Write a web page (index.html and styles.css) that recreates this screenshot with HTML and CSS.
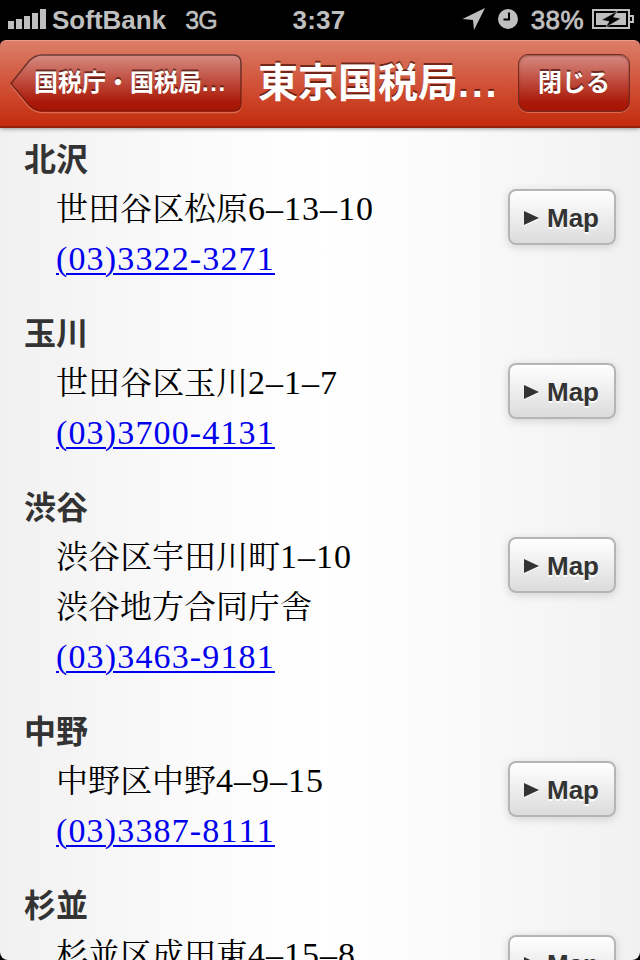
FILE: index.html
```html
<!DOCTYPE html>
<html lang="ja">
<head>
  <meta charset="UTF-8" />
  <title>東京国税局</title>
  <link rel="stylesheet" href="styles.css">
</head>
<body>
  <div class="status-bar">
    <div class="status-left">
      <svg class="signal" width="38" height="20" viewBox="0 0 38 20" fill="#bfbfbf">
        <rect x="0" y="12" width="6" height="8" />
        <rect x="8" y="10" width="6" height="10" />
        <rect x="16" y="7" width="6" height="13" />
        <rect x="24" y="4" width="6" height="16" />
        <rect x="32" y="0" width="6" height="20" />
      </svg>
      <span class="carrier">SoftBank</span>
      <span class="network">3G</span>
    </div>
    <span class="clock">3:37</span>
    <div class="status-right">
      <svg width="24" height="24" viewBox="0 0 24 24" fill="#bfbfbf">
        <path d="M23 1 L0.5 12 L11 13 L12 23 Z" />
      </svg>
      <svg class="alarm" width="20" height="20" viewBox="0 0 20 20">
        <circle cx="10" cy="10" r="10" fill="#bfbfbf" />
        <path d="M11 3.5 V10.5 H5.5" fill="none" stroke="#000" stroke-width="2" />
      </svg>
      <span class="percent">38%</span>
      <svg width="42" height="20" viewBox="0 0 42 20">
        <rect x="1" y="1" width="36" height="18" fill="none" stroke="#bfbfbf" stroke-width="2" />
        <rect x="4" y="4" width="30" height="12" fill="#bfbfbf" />
        <path d="M38 7 H41 V13 H38" fill="none" stroke="#bfbfbf" stroke-width="2" />
        <path d="M25.5 2 L9.5 11 L17 12.5 L13.5 18.5 L29 9.5 L21.5 8 Z" fill="#000" stroke="#bfbfbf" stroke-width="0.6" />
      </svg>
    </div>
  </div>

  <div class="nav-wrap">
    <div class="nav-bar">
      <button class="back-button">
        <svg class="back-shape" width="234" height="62" viewBox="0 0 234 62">
          <defs>
            <linearGradient id="backFill" x1="0" y1="0" x2="0" y2="1">
              <stop offset="0" stop-color="#d68b82" />
              <stop offset="0.5" stop-color="#bd4738" />
              <stop offset="0.85" stop-color="#aa1908" />
              <stop offset="1" stop-color="#a51505" />
            </linearGradient>
            <linearGradient id="backLine" x1="0" y1="0" x2="0" y2="1">
              <stop offset="0" stop-color="#6c3a34" />
              <stop offset="1" stop-color="#841708" />
            </linearGradient>
          </defs>
          <path d="M1 31 L19 8 Q25 2 32 2 H223 Q231 2 231 10 V50 Q231 58.5 223 58.5 H32 Q25 58.5 19 53 Z" fill="none" stroke="#e58168" stroke-opacity="0.7" stroke-width="1.6" />
          <path d="M1 29.5 L19 7 Q25 1 32 1 H223 Q231 1 231 9 V49 Q231 57 223 57 H32 Q25 57 19 51 Z" fill="url(#backFill)" stroke="url(#backLine)" stroke-width="1.6" />
        </svg>
        <span class="back-label">国税庁・国税局<span class="dots">...</span></span>
      </button>
      <h1 class="nav-title">東京国税局<span class="dots">...</span></h1>
      <button class="close-button">閉じる</button>
    </div>
  </div>

  <div class="content">
    <div class="office">
      <div class="info">
        <h2>北沢</h2>
        <p>世田谷区松原<span class="num">6–13–10</span></p>
        <p><a class="tel" href="tel:0333223271">(03)3322-3271</a></p>
      </div>
      <button class="map-button"><i class="arrow"></i>Map</button>
    </div>
    <div class="office">
      <div class="info">
        <h2>玉川</h2>
        <p>世田谷区玉川<span class="num">2–1–7</span></p>
        <p><a class="tel" href="tel:0337004131">(03)3700-4131</a></p>
      </div>
      <button class="map-button"><i class="arrow"></i>Map</button>
    </div>
    <div class="office">
      <div class="info">
        <h2>渋谷</h2>
        <p>渋谷区宇田川町<span class="num">1–10</span></p>
        <p>渋谷地方合同庁舎</p>
        <p><a class="tel" href="tel:0334639181">(03)3463-9181</a></p>
      </div>
      <button class="map-button"><i class="arrow"></i>Map</button>
    </div>
    <div class="office">
      <div class="info">
        <h2>中野</h2>
        <p>中野区中野<span class="num">4–9–15</span></p>
        <p><a class="tel" href="tel:0333878111">(03)3387-8111</a></p>
      </div>
      <button class="map-button"><i class="arrow"></i>Map</button>
    </div>
    <div class="office">
      <div class="info">
        <h2>杉並</h2>
        <p>杉並区成田東<span class="num">4–15–8</span></p>
      </div>
      <button class="map-button"><i class="arrow"></i>Map</button>
    </div>
  </div>
</body>
</html>
```
FILE: styles.css
```css
* {
  box-sizing: border-box;
}
body {
  margin: 0;
  height: 960px;
  display: flex;
  flex-direction: column;
  overflow: hidden;
  background: #000;
  font-family: "Liberation Sans", "Noto Sans CJK JP", sans-serif;
}
button {
  padding: 0;
  font-family: inherit;
  cursor: pointer;
}

/* status bar */
.status-bar {
  flex: none;
  height: 40px;
  display: grid;
  grid-template-columns: 1fr auto 1fr;
  align-items: center;
  padding: 0 6px 2px 8px;
  color: #bfbfbf;
  font-size: 26px;
  font-weight: bold;
  line-height: 36px;
}
.status-left,
.status-right {
  display: flex;
  align-items: center;
}
.status-right {
  justify-content: flex-end;
}
.carrier,
.network,
.clock,
.percent {
  padding-top: 2px;
}
.carrier {
  margin-left: 6px;
}
.network {
  margin-left: 19px;
  font-size: 25px;
  font-weight: normal;
  letter-spacing: -0.8px;
  -webkit-text-stroke: 0.5px #bfbfbf;
}
.clock {
  margin-right: 4px;
  letter-spacing: 0.3px;
}
.alarm {
  margin-left: 12px;
}
.percent {
  margin: 0 8px 0 13px;
  font-weight: normal;
  letter-spacing: 0.4px;
  -webkit-text-stroke: 0.8px #bfbfbf;
}

/* navigation bar */
.nav-wrap {
  flex: none;
  position: relative;
  z-index: 1;
  box-shadow: 0 1px 4px rgba(0, 0, 0, 0.4);
}
.nav-bar {
  height: 88px;
  display: flex;
  align-items: flex-start;
  padding: 14px 10px 0;
  border-top: 1px solid #eb9c8b;
  border-bottom: 2px solid #93200b;
  border-radius: 6px 6px 0 0;
  background: linear-gradient(#dc7e69, #d15339 50%, #c32b0c);
  color: #fff;
}
.back-button {
  position: relative;
  width: 232px;
  height: 58px;
  margin-top: -1px;
  border: none;
  background: none;
  color: #fff;
  text-align: left;
}
.back-shape {
  position: absolute;
  left: 0;
  top: 0;
}
.back-label {
  position: relative;
  display: block;
  padding-left: 24px;
  font-size: 24px;
  font-weight: bold;
  line-height: 56px;
  white-space: nowrap;
  text-shadow: 0 -2px 0 rgba(70, 15, 10, 0.7);
}
.nav-title {
  flex: 1;
  margin: 0 0 0 16px;
  font-size: 40px;
  font-weight: bold;
  line-height: 56px;
  white-space: nowrap;
  text-shadow: 0 -2px 0 rgba(80, 20, 10, 0.75);
}
.dots {
  letter-spacing: 1.6px;
}
.nav-title .dots {
  letter-spacing: 2.6px;
}
.close-button {
  width: 112px;
  height: 58px;
  margin-top: -1px;
  border: 1.5px solid #762b21;
  border-radius: 10px;
  background: linear-gradient(#d68b82, #bd4738 50%, #aa1908 85%, #a51505);
  box-shadow: 0 1px 0 rgba(229, 129, 104, 0.7), inset 0 1px 2px rgba(70, 20, 15, 0.5);
  color: #fff;
  font-size: 24px;
  font-weight: bold;
  line-height: 52px;
  text-shadow: 0 -2px 0 rgba(70, 15, 10, 0.7);
}

/* office list */
.content {
  flex: 1;
  min-height: 0;
  overflow: hidden;
  padding: 3px 24px 0;
  border-radius: 0 0 8px 8px;
  background: linear-gradient(to right, #f1f1f1, #fbfbfb 32%, #fff 50%, #fbfbfb 68%, #f1f1f1);
}
.office {
  display: flex;
  justify-content: space-between;
  align-items: flex-start;
  margin-bottom: 24px;
}
.info h2,
.info p {
  margin: 0;
  height: 50px;
  font-size: 32px;
  line-height: 50px;
  white-space: nowrap;
}
.info h2 {
  color: #333;
  font-family: "Noto Sans CJK JP", sans-serif;
  font-weight: bold;
  line-height: 52px;
}
.info p {
  padding-left: 32px;
  color: #000;
  font-family: "Noto Serif CJK JP", "Noto Sans CJK JP", serif;
}
.num,
.tel {
  font-family: "Liberation Serif", serif;
  font-size: 34px;
  font-kerning: none;
  letter-spacing: 1px;
}
.tel {
  color: #0000ee;
  letter-spacing: 1.15px;
  text-decoration: underline;
  text-decoration-thickness: 2px;
  text-underline-offset: 3px;
}
.map-button {
  flex: none;
  width: 108px;
  height: 56px;
  margin-top: 58px;
  display: flex;
  align-items: center;
  justify-content: center;
  border: 2px solid #b5b5b5;
  border-radius: 8px;
  background: linear-gradient(#fff, #dcdcdc);
  box-shadow: 0 2px 10px rgba(0, 0, 0, 0.15);
  color: #333;
  font-size: 26px;
  font-weight: bold;
  line-height: 52px;
  padding: 2px 1px 0 0;
  text-shadow: 0 2px 0 #fff;
}
.arrow {
  margin-right: 8px;
  border-left: 15px solid #333;
  border-top: 7px solid transparent;
  border-bottom: 7px solid transparent;
  filter: drop-shadow(0 1px 0 #fff);
}
```
